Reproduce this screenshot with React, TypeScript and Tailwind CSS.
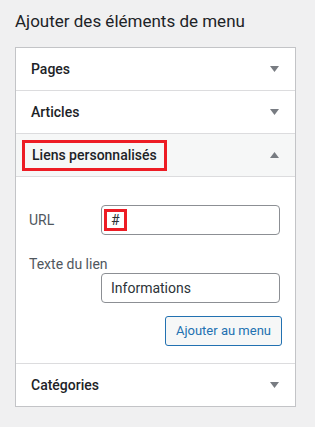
import React from 'react';

const Caret = ({ up = false }: { up?: boolean }) => (
  <svg width="9" height="6" viewBox="0 0 9 6" className="shrink-0">
    {up ? <path d="M0 6 L4.5 0 L9 6 Z" fill="#787c82" /> : <path d="M0 0 L9 0 L4.5 6 Z" fill="#787c82" />}
  </svg>
);

const Row = ({ label }: { label: string }) => (
  <div className="flex h-[43px] items-center justify-between border-b border-[#dcdcde] pl-[15px] pr-[16px] last:h-[42px] last:border-b-0">
    <span className="text-[14px] font-medium text-[#1d2327]">{label}</span>
    <Caret />
  </div>
);

export default function App() {
  return (
    <div className="min-h-[427px] w-[315px] bg-[#f0f0f1] pl-[15px] pr-[19px] pt-[8px] pb-[19px] font-['Roboto',sans-serif]">
      <h2 className="h-[39px] text-[17px] leading-[26px] text-[#1d2327]">Ajouter des éléments de menu</h2>
      <div className="border border-[#c3c4c7] bg-white">
        <Row label="Pages" />
        <Row label="Articles" />
        <div className="flex h-[43px] items-center justify-between border-b border-[#dcdcde] bg-[#f6f7f7] pl-[6px] pr-[16px]">
          <span className="border-[3px] border-[#ed1c24] px-[7px] py-[3px] text-[14px] font-medium leading-[19px] text-[#1d2327]">
            Liens personnalisés
          </span>
          <Caret up />
        </div>
        <div className="border-b border-[#dcdcde] pl-[13px] pr-[15px] pt-[28px] pb-[17px]">
          <div className="flex items-center">
            <span className="w-[72px] text-[14px] text-[#50575e]">URL</span>
            <div className="flex h-[30px] flex-1 items-center rounded-[4px] border border-[#8c8f94] bg-white pl-[2px]">
              <span className="border-[3px] border-[#ed1c24] px-[4px] text-[14px] leading-[16px] text-[#2c3338]">#</span>
            </div>
          </div>
          <div className="mt-[21px] text-[14px] leading-[17px] text-[#50575e]">Texte du lien</div>
          <div className="flex">
            <div className="w-[72px]" />
            <div className="flex h-[30px] flex-1 items-center rounded-[4px] border border-[#8c8f94] bg-white pl-[9px] text-[14px] text-[#2c3338]">
              Informations
            </div>
          </div>
          <div className="mt-[13px] flex justify-end">
            <button className="-mr-[2px] h-[30px] rounded-[3px] border border-[#2271b1] bg-[#f6f7f7] px-[10px] text-[13px] text-[#2271b1]">
              Ajouter au menu
            </button>
          </div>
        </div>
        <Row label="Catégories" />
      </div>
    </div>
  );
}
